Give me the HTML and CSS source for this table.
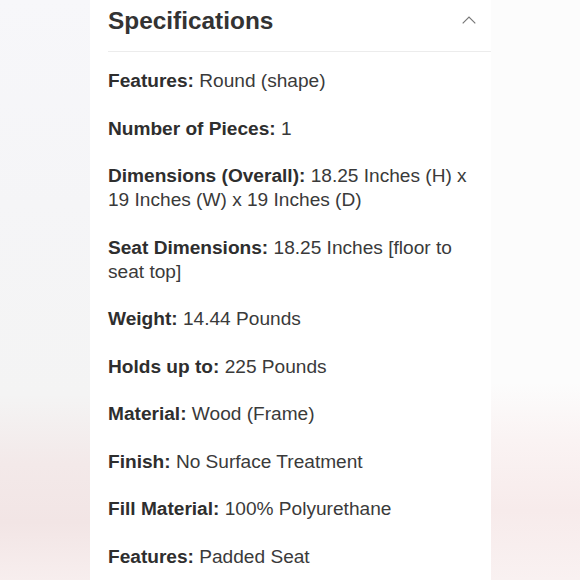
FILE: index.html
```html
<!DOCTYPE html>
<html lang="en">
<head>
<meta charset="utf-8">
<title>Specifications</title>
<link rel="stylesheet" href="styles.css">
</head>
<body>
<div class="page">
  <div class="side side-left"></div>
  <section class="card">
    <header class="card-header">
      <h2 class="title">Specifications</h2>
      <svg class="chevron" width="14" height="8" viewBox="0 0 14 8" aria-hidden="true">
        <path d="M0.7 7.3 L7 1 L13.3 7.3" fill="none" stroke="#777" stroke-width="1.2"/>
      </svg>
    </header>
    <div class="specs">
      <p><b>Features:</b> Round (shape)</p>
      <p><b>Number of Pieces:</b> 1</p>
      <p><b>Dimensions (Overall):</b> 18.25 Inches (H) x 19 Inches (W) x 19 Inches (D)</p>
      <p><b>Seat Dimensions:</b> 18.25 Inches [floor to seat top]</p>
      <p><b>Weight:</b> 14.44 Pounds</p>
      <p><b>Holds up to:</b> 225 Pounds</p>
      <p><b>Material:</b> Wood (Frame)</p>
      <p><b>Finish:</b> No Surface Treatment</p>
      <p><b>Fill Material:</b> 100% Polyurethane</p>
      <p><b>Features:</b> Padded Seat</p>
    </div>
  </section>
  <div class="side side-right"></div>
</div>
</body>
</html>
```

FILE: styles.css
```css
html, body {
  margin: 0;
  padding: 0;
  height: 100%;
  overflow: hidden;
}
body {
  font-family: "Liberation Sans", Arial, Helvetica, sans-serif;
  color: #333;
}
.page {
  display: grid;
  grid-template-columns: 90px 401px 89px;
  height: 580px;
}
.side-left {
  background: linear-gradient(180deg, #f7f7fa 0%, #f5f5f7 35%, #f4f4f4 68%, #f3e9e9 80%, #f2e5e5 90%, #f7eeee 100%);
}
.side-right {
  background: linear-gradient(180deg, #fcfcfc 0%, #fcfcfc 66%, #faf3f3 76%, #f7ebeb 88%, #f9f1f1 100%);
}
.card {
  background: #fff;
  overflow: hidden;
}
.card-header {
  display: flex;
  justify-content: space-between;
  align-items: flex-start;
  margin-left: 18px;
  padding: 7px 15px 16px 0;
  border-bottom: 1px solid #ececec;
}
.title {
  margin: 0;
  font-size: 24.4px;
  line-height: 28px;
  font-weight: 700;
  color: #333;
}
.chevron {
  display: block;
  margin-top: 9px;
}
.specs {
  padding: 17px 16px 0 18px;
  display: flex;
  flex-direction: column;
  gap: 23.5px;
}
.specs p {
  margin: 0;
  font-size: 19.1px;
  line-height: 24px;
  color: #3a3a3a;
}
.specs b {
  font-weight: 700;
  color: #2e2e2e;
}
```
